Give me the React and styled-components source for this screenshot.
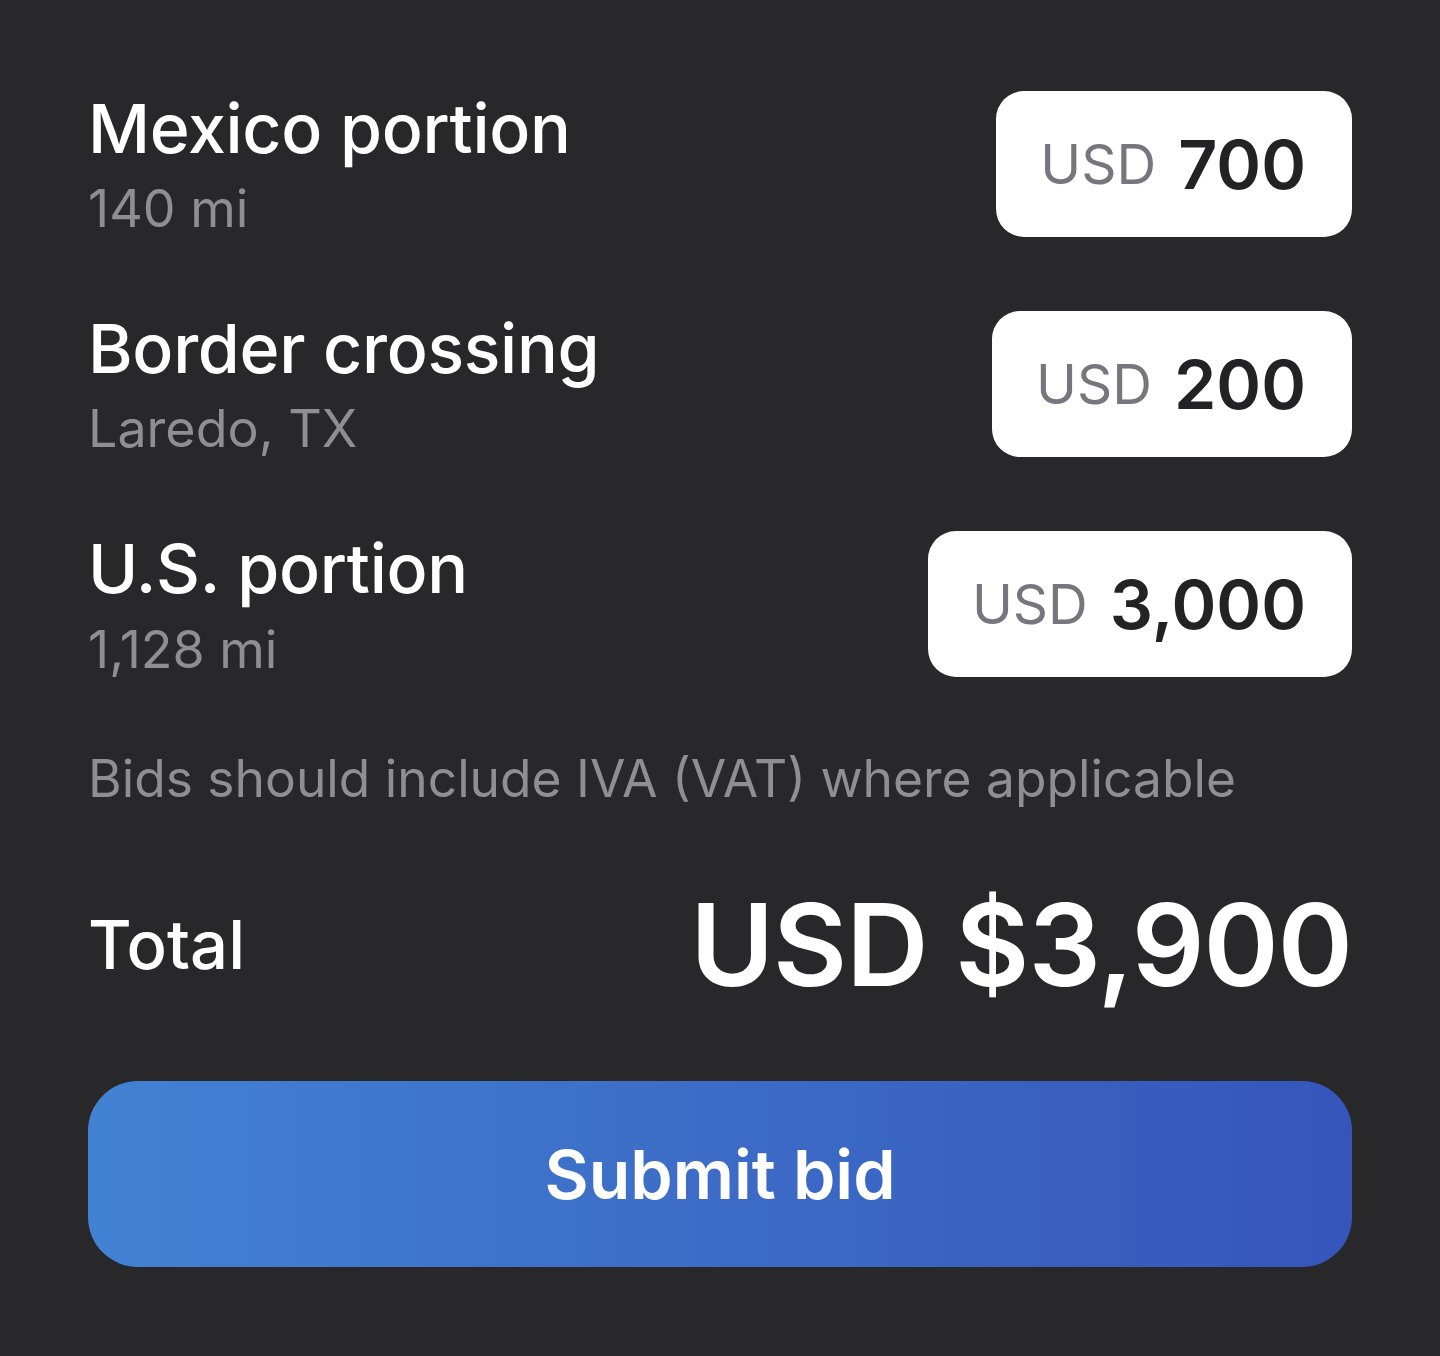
import styled, { createGlobalStyle } from 'styled-components';

const GlobalStyle = createGlobalStyle`
  html, body {
    margin: 0;
    padding: 0;
    background: #28282b;
  }
  body {
    font-family: Inter, 'Liberation Sans', sans-serif;
    -webkit-font-smoothing: antialiased;
  }
`;

const Page = styled.div`
  width: 1440px;
  min-height: 1356px;
  box-sizing: border-box;
  padding: 87px 88px 0 88px;
  background: #28282b;
  display: flex;
  flex-direction: column;
`;

const Legs = styled.div`
  display: flex;
  flex-direction: column;
  gap: 66px;
`;

const Leg = styled.div`
  display: flex;
  justify-content: space-between;
  align-items: center;
`;

const LegInfo = styled.div`
  display: flex;
  flex-direction: column;
  gap: 9px;
`;

const LegTitle = styled.div`
  font-size: 68px;
  line-height: 1.21;
  font-weight: 500;
  color: #ffffff;
  letter-spacing: -0.3px;
`;

const LegSub = styled.div`
  font-size: 52px;
  line-height: 1.21;
  font-weight: 400;
  color: #8e8e93;
`;

const AmountPill = styled.div`
  height: 146px;
  box-sizing: border-box;
  padding: 0 46px 0 44px;
  border-radius: 28px;
  background: #ffffff;
  display: flex;
  align-items: center;
  gap: 22px;
`;

const Ccy = styled.span`
  font-size: 55px;
  font-weight: 400;
  color: #77767f;
`;

const Amount = styled.span`
  font-size: 68px;
  font-weight: 600;
  color: #232325;
`;

const Note = styled.p`
  margin: 65px 0 0 0;
  font-size: 51.5px;
  line-height: 1.21;
  color: #8e8e93;
`;

const TotalRow = styled.div`
  margin-top: 67px;
  display: flex;
  justify-content: space-between;
  align-items: center;
`;

const TotalLabel = styled.div`
  font-size: 67px;
  line-height: 1.21;
  font-weight: 500;
  color: #ffffff;
`;

const TotalValue = styled.div`
  font-size: 114px;
  line-height: 1.21;
  font-weight: 600;
  color: #ffffff;
  letter-spacing: -1px;
`;

const SubmitButton = styled.button`
  margin-top: 67px;
  height: 186px;
  width: 100%;
  border: none;
  border-radius: 50px;
  background: linear-gradient(90deg, #4282d3 0%, #3d6ec8 45%, #3555bb 100%);
  color: #ffffff;
  font-family: Inter, 'Liberation Sans', sans-serif;
  font-size: 68px;
  font-weight: 600;
  cursor: pointer;
`;

const legs = [
  { title: 'Mexico portion', sub: '140 mi', amount: '700' },
  { title: 'Border crossing', sub: 'Laredo, TX', amount: '200' },
  { title: 'U.S. portion', sub: '1,128 mi', amount: '3,000' },
];

export default function App() {
  return (
    <>
      <GlobalStyle />
      <Page>
        <Legs>
          {legs.map((leg) => (
            <Leg key={leg.title}>
              <LegInfo>
                <LegTitle>{leg.title}</LegTitle>
                <LegSub>{leg.sub}</LegSub>
              </LegInfo>
              <AmountPill>
                <Ccy>USD</Ccy>
                <Amount>{leg.amount}</Amount>
              </AmountPill>
            </Leg>
          ))}
        </Legs>
        <Note>Bids should include IVA (VAT) where applicable</Note>
        <TotalRow>
          <TotalLabel>Total</TotalLabel>
          <TotalValue>USD $3,900</TotalValue>
        </TotalRow>
        <SubmitButton>Submit bid</SubmitButton>
      </Page>
    </>
  );
}
